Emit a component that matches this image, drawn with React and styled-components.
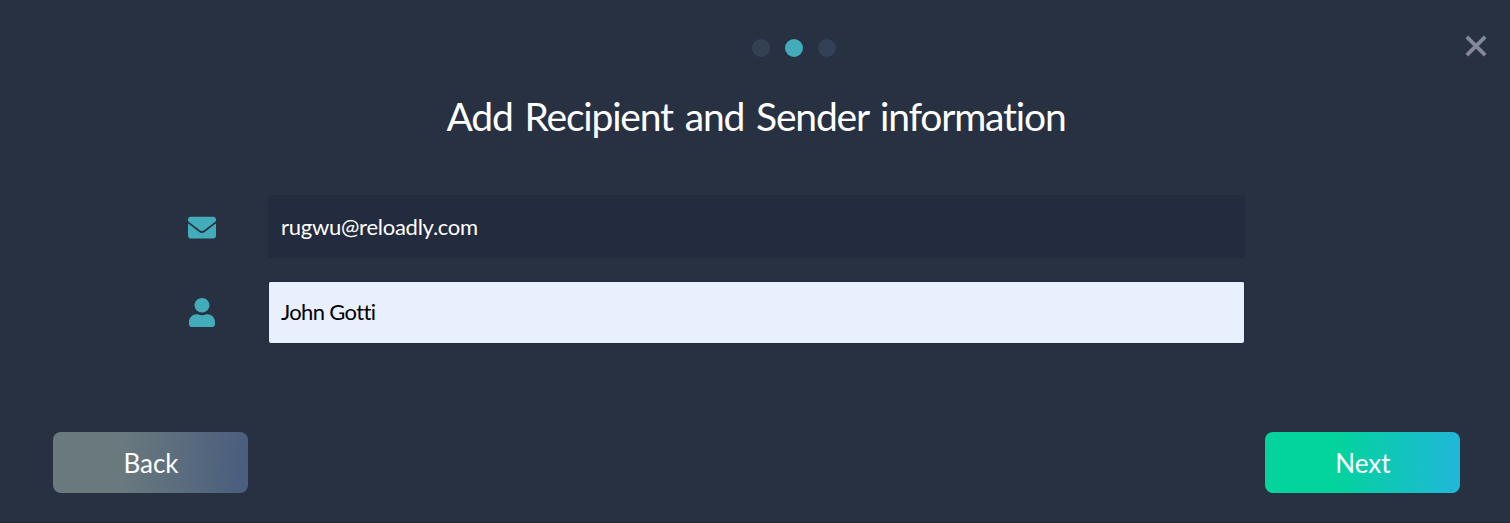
import React, {useState} from 'react';
import styled, {createGlobalStyle} from 'styled-components';
import {FaEnvelope, FaUser} from 'react-icons/fa';

const steps = [1, 2, 3];

function App() {
    const [email, setEmail] = useState('rugwu@reloadly.com');
    const [name, setName] = useState('John Gotti');

    return (
        <>
            <GlobalStyle />
            <ModalStyled>
                <Header>
                    <Steps>
                        {steps.map((step) => <Dot key={step} $active={step === 2} />)}
                    </Steps>
                    <CloseButton aria-label="Close">
                        <svg width="22" height="22" viewBox="0 0 22 22">
                            <path d="M1.8 1.8L20.2 20.2M20.2 1.8L1.8 20.2" stroke="currentColor" strokeWidth="3.8" />
                        </svg>
                    </CloseButton>
                </Header>
                <Title>Add Recipient and Sender information</Title>
                <Form>
                    <Field>
                        <IconBox $width="28px"><FaEnvelope preserveAspectRatio="none" /></IconBox>
                        <Input
                            $spacing="-0.26px"
                            value={email}
                            onChange={(e) => setEmail(e.target.value)}
                        />
                    </Field>
                    <Field>
                        <IconBox $width="26px"><FaUser preserveAspectRatio="none" /></IconBox>
                        <Input
                            $filled
                            $spacing="-0.65px"
                            value={name}
                            onChange={(e) => setName(e.target.value)}
                        />
                    </Field>
                </Form>
                <Footer>
                    <Button $from="#69797e" $to="#4a5e7e">Back</Button>
                    <Button $from="#03d39c" $to="#20b8d8">Next</Button>
                </Footer>
            </ModalStyled>
        </>
    );
}

const GlobalStyle = createGlobalStyle`
    *{
        box-sizing: border-box;
    }
    body{
        margin: 0;
        background: #283142;
        font-family: Lato, sans-serif;
        font-variant-ligatures: none;
    }
`;

const ModalStyled = styled.div`
    display: flex;
    flex-direction: column;
    height: 523px;
    overflow: hidden;
    border-bottom: 1px solid #232b3b;
`;

const Header = styled.header`
    display: grid;
    grid-template-columns: 1fr auto 1fr;
    align-items: start;
    padding: 35px 23px 0 101px;
    height: 92px;
`;

const Steps = styled.div`
    grid-column: 2;
    display: flex;
    gap: 15px;
    padding-top: 4px;
`;

const Dot = styled.span`
    width: 18px;
    height: 18px;
    border-radius: 50%;
    background: ${(props) => (props.$active ? '#43acbb' : '#334055')};
`;

const CloseButton = styled.button`
    justify-self: end;
    display: flex;
    padding: 0;
    border: none;
    background: none;
    color: #85889a;
`;

const Title = styled.h1`
    margin: 0;
    padding-left: 2px;
    height: 103px;
    line-height: 48px;
    font-size: 39px;
    font-weight: 400;
    letter-spacing: -1.2px;
    word-spacing: 3.2px;
    text-align: center;
    white-space: nowrap;
    color: #fff;
`;

const Form = styled.form`
    display: flex;
    flex-direction: column;
    gap: 22px;
    padding: 0 265px 0 188px;
`;

const Field = styled.label`
    display: flex;
    align-items: center;
`;

const IconBox = styled.span`
    display: flex;
    justify-content: center;
    width: 28px;
    margin-right: 52px;
    padding-top: 1px;
    color: #43acbb;

    svg{
        flex-shrink: 0;
        width: ${(props) => props.$width};
        height: 29px;
    }
`;

const Input = styled.input`
    flex: 1;
    min-width: 0;
    height: ${(props) => (props.$filled ? '64px' : '63px')};
    padding: ${(props) => (props.$filled ? '0 12px 2px' : '0 12px')};
    border: 1px solid #232b3e;
    border-top-width: ${(props) => (props.$filled ? '2px' : '1px')};
    border-radius: 3px;
    outline: none;
    background: ${(props) => (props.$filled ? '#e8f0fe' : '#232b3e')};
    color: ${(props) => (props.$filled ? '#000' : '#fff')};
    font-family: inherit;
    font-size: 22px;
    font-variant-ligatures: none;
    letter-spacing: ${(props) => props.$spacing};
`;

const Footer = styled.footer`
    display: flex;
    justify-content: space-between;
    margin-top: 88px;
    padding: 0 50px 0 53px;
`;

const Button = styled.button`
    width: 195px;
    height: 61px;
    padding: 0 0 0 1px;
    border: none;
    border-radius: 8px;
    background: linear-gradient(92deg, ${(props) => props.$from} 36%, ${(props) => props.$to} 98%);
    color: #fff;
    font-family: inherit;
    font-size: 26px;
`;

export default App;
